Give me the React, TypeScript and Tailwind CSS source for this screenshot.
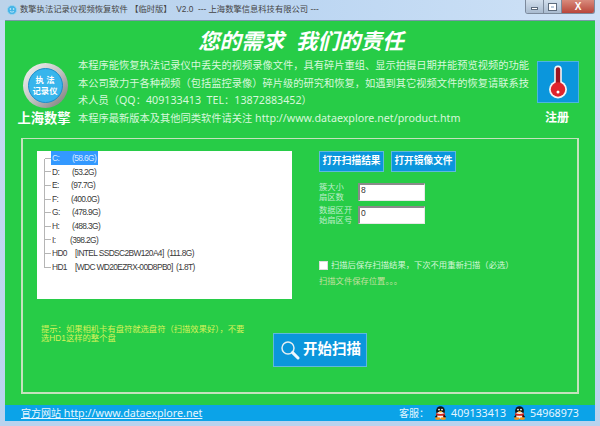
import React from "react";

const font = { fontFamily: '"Liberation Sans","Noto Sans CJK SC",sans-serif' };

const drives: { k: string; v: string; gap: string; sel?: boolean }[] = [
  { k: "C:", v: "(58.6G)", gap: "w-[20px]", sel: true },
  { k: "D:", v: "(53.2G)", gap: "w-[20px]" },
  { k: "E:", v: "(97.7G)", gap: "w-[19px]" },
  { k: "F:", v: "(400.0G)", gap: "w-[19px]" },
  { k: "G:", v: "(478.9G)", gap: "w-[20px]" },
  { k: "H:", v: "(488.3G)", gap: "w-[20px]" },
  { k: "I:", v: "(398.2G)", gap: "w-[18px]" },
  { k: "HD0", v: "[INTEL SSDSC2BW120A4]  (111.8G)", gap: "w-[23px]" },
  { k: "HD1", v: "[WDC WD20EZRX-00D8PB0]  (1.8T)", gap: "w-[23px]" },
];

function L({ children }: { children: React.ReactNode }) {
  return <span className="[font-family:'Noto_Sans',sans-serif] text-[10.7px] leading-none">{children}</span>;
}

function QQ() {
  return (
    <svg width="13" height="14" viewBox="0 0 13 14" className="block">
      <ellipse cx="6.5" cy="5" rx="4.4" ry="4.8" fill="#151515" />
      <ellipse cx="6.5" cy="9.4" rx="4.2" ry="3.6" fill="#f5f5f5" />
      <circle cx="5" cy="3.6" r="0.9" fill="#fff" />
      <circle cx="8" cy="3.6" r="0.9" fill="#fff" />
      <path d="M2.2 7 Q6.5 9 10.8 7 L11 9.2 Q6.5 10.4 2 9.2 Z" fill="#d8261c" />
      <path d="M9 9 L10.6 9 L10.6 11.6 L9 11.6 Z" fill="#d8261c" />
      <path d="M0.8 11 L3.2 8.2 L3.4 12 Z" fill="#151515" />
      <path d="M12.2 11 L9.8 8.2 L9.6 12 Z" fill="#151515" />
      <ellipse cx="3.8" cy="12.6" rx="2.8" ry="1.3" fill="#f0931a" />
      <ellipse cx="9.2" cy="12.6" rx="2.8" ry="1.3" fill="#f0931a" />
      <ellipse cx="6.5" cy="5.8" rx="1.6" ry="0.8" fill="#f2b21c" />
    </svg>
  );
}

function SmallButton({ children }: { children: React.ReactNode }) {
  return (
    <div className="w-[65px] h-[21px] flex items-center justify-center bg-[#0b96dc] border border-[#5fb9dc] text-white text-[9.7px] font-bold whitespace-nowrap">
      {children}
    </div>
  );
}

function Field({ a, b, value }: { a: string; b: string; value: string }) {
  return (
    <div className="flex items-start h-[23px]">
      <div className="w-[39px] text-[8.3px] leading-[9.5px] text-[#bfeecb]">
        <div>{a}</div>
        <div>{b}</div>
      </div>
      <div className="w-[67px] h-[18px] bg-white border-t-2 border-l-2 border-t-[#8a8a8a] border-l-[#8a8a8a] border-r border-b border-r-[#e8e8e8] border-b-[#e8e8e8] text-[8.5px] leading-[11px] text-[#333] pl-px">
        {value}
      </div>
    </div>
  );
}

export default function App() {
  return (
    <div style={font} className="w-[600px] h-[426px] flex flex-col overflow-hidden bg-gradient-to-b from-[#c6dbf2] to-[#b9d3ee]">
      <div className="h-[20px] shrink-0 flex items-start bg-gradient-to-r from-[#bcd3ea] via-[#bcd6f2] to-[#cfe2f6]">
        <svg width="10" height="10" viewBox="0 0 10 10" className="mt-[5px] ml-[7px]">
          <circle cx="5" cy="5" r="4.6" fill="#47b5e8" stroke="#9ad4ef" strokeWidth="0.8" />
          <circle cx="3.4" cy="4" r="0.8" fill="#e4f5fc" />
          <circle cx="6.6" cy="4" r="0.8" fill="#e4f5fc" />
          <path d="M3 6.5 Q5 7.8 7 6.5" stroke="#e4f5fc" strokeWidth="0.7" fill="none" />
        </svg>
        <div className="ml-[3px] mt-[4px] text-[8.3px] leading-[11px] text-[#444] whitespace-pre">
          数擎执法记录仪视频恢复软件 【临时版】  V2.0  --- 上海数擎信息科技有限公司 ---
        </div>
        <div className="ml-auto mr-[5px] flex h-[14px] border border-t-0 border-[#7c8a9c] rounded-b-[3px] overflow-hidden">
          <div className="w-[18px] bg-gradient-to-b from-[#d2dfed] to-[#a9bbcf] flex items-center justify-center border-r border-[#7c8a9c]">
            <div className="w-[7px] h-[3px] mt-[3px] bg-white border border-[#5c6b7c]" />
          </div>
          <div className="w-[18px] bg-gradient-to-b from-[#d2dfed] to-[#a9bbcf] flex items-center justify-center border-r border-[#7c8a9c]">
            <div className="w-[7px] h-[6px] border-2 border-white outline outline-1 outline-[#5c6b7c]" />
          </div>
          <div className="w-[32px] bg-gradient-to-b from-[#d88a7c] to-[#b8453a] flex items-center justify-center text-white text-[10px] font-bold leading-none">
            X
          </div>
        </div>
      </div>

      <div className="mx-[5px] h-[401px] shrink-0 bg-[#27cc47] flex flex-col border-t border-[#7a97a8]">
        <div className="h-[117px] shrink-0 flex">
          <div className="w-[73px] shrink-0 pl-[5px] flex flex-col items-center">
            <div className="mt-[42px] ml-[2px] w-[45px] h-[45px] rounded-full bg-gradient-to-br from-[#f7f7f7] via-[#c4c4c4] to-[#777] flex items-center justify-center">
              <div className="w-[35px] h-[35px] rounded-full bg-[#37b5ec] border border-[#1b8fcb] flex flex-col items-center justify-center text-white text-[8.3px] leading-[11px] font-bold">
                <div>执 法</div>
                <div className="whitespace-nowrap">记录仪</div>
              </div>
            </div>
            <div className="mt-[2px] text-white text-[13.3px] leading-[18px] font-bold whitespace-nowrap">上海数擎</div>
          </div>
          <div className="flex-1 min-w-0 flex flex-col">
            <div className="h-[36px] pt-[8px] pl-[120px] text-white text-[21.5px] leading-[26px] font-bold italic whitespace-pre">
              您的需求  我们的责任
            </div>
            <div className="text-[10.25px] leading-[17.6px] text-[#d8f8dc] whitespace-pre">
              <div className="h-[17.6px]">本程序能恢复执法记录仪中丢失的视频录像文件，具有碎片重组、显示拍摄日期并能预览视频的功能</div>
              <div className="h-[17.6px]">本公司致力于各种视频（包括监控录像）碎片级的研究和恢复，如遇到其它视频文件的恢复请联系技</div>
              <div className="h-[17.6px]">术人员（<L>QQ</L>：<L>409133413  TEL</L>：<L>13872883452</L>）</div>
              <div className="h-[17.6px]">本程序最新版本及其他同类软件请关注 <L>http://www.dataexplore.net/product.htm</L></div>
            </div>
          </div>
          <div className="w-[58px] shrink-0 flex flex-col items-start">
            <div className="mt-[40px] w-[42px] h-[42px] bg-[#0b96dc] border border-[#4db5de] flex items-center justify-center">
              <svg width="20" height="34" viewBox="0 0 20 34">
                <rect x="6.2" y="0.5" width="7.6" height="24" rx="3.8" fill="#f5f5f5" />
                <circle cx="10" cy="24.5" r="9" fill="#f5f5f5" />
                <rect x="7.8" y="2.2" width="4.4" height="20" rx="2.2" fill="#9c1420" />
                <circle cx="10" cy="24.5" r="7.2" fill="#e0242c" />
                <circle cx="10" cy="27" r="1.5" fill="#fff" />
              </svg>
            </div>
            <div className="mt-[6px] ml-[8px] text-white text-[12px] leading-[18px] font-bold">注册</div>
          </div>
        </div>

        <div className="mx-[16px] h-[256px] shrink-0 border-2 border-t border-[#c4e2bd] flex flex-col">
          <div className="flex h-[173px] shrink-0 pt-[12px] pl-[14px]">
            <div className="w-[255px] h-[148px] pt-[0.5px] bg-white shrink-0 flex items-start text-[8.4px] tracking-[-0.62px] text-[#3a3a3a]">
              <div className="ml-[7px] mt-[7px] h-[109px] w-px bg-[#b5b5b5]" />
              <div className="flex flex-col">
                {drives.map((d) => (
                  <div key={d.k} className="flex items-center h-[13.6px] whitespace-pre">
                    <div className="w-[6px] h-px bg-[#b5b5b5]" />
                    <div className={d.sel ? "flex items-center pl-[1px] w-[47px] h-[14px] bg-[#3399ff] text-[#dcebff]" : "flex pl-[1px]"}>
                      <span className={d.gap}>{d.k}</span>
                      <span>{d.v}</span>
                    </div>
                  </div>
                ))}
              </div>
            </div>
            <div className="ml-[27px] flex flex-col">
              <div className="flex gap-[7px]">
                <SmallButton>打开扫描结果</SmallButton>
                <SmallButton>打开镜像文件</SmallButton>
              </div>
              <div className="mt-[11px]">
                <Field a="簇大小" b="扇区数" value="8" />
                <Field a="数据区开" b="始扇区号" value="0" />
              </div>
              <div className="mt-[31px] flex items-center gap-[3px]">
                <div className="w-[9px] h-[9px] bg-white border border-[#ddd]" />
                <div className="text-[8.3px] leading-[11px] text-[#d5f7d9] whitespace-nowrap">扫描后保存扫描结果，下次不用重新扫描（必选）</div>
              </div>
              <div className="mt-[5px] text-[8.3px] leading-[11px] text-[#c6e0a0] whitespace-nowrap">扫描文件保存位置。。。</div>
            </div>
          </div>
          <div className="flex items-start">
            <div className="ml-[18px] mt-[13px] w-[207px] text-[8.3px] leading-[9.3px] text-[#d8f25a]">
              提示：如果相机卡有盘符就选盘符（扫描效果好），不要选HD1这样的整个盘
            </div>
            <div className="ml-[25px] mt-[21px] w-[94px] h-[34px] pl-[6px] bg-[#0b96dc] border border-[#5fb9dc] flex items-center gap-[3px] text-white text-[14.5px] font-bold">
              <svg width="20" height="20" viewBox="0 0 20 20" fill="none" className="shrink-0">
                <circle cx="8" cy="8" r="6" stroke="#e6eef2" strokeWidth="1.5" />
                <path d="M12.6 12.6 L18 18" stroke="#eef8ff" strokeWidth="3" strokeLinecap="round" />
              </svg>
              <span className="whitespace-nowrap">开始扫描</span>
            </div>
          </div>
        </div>

        <div className="mt-[11px] h-[16px] shrink-0 bg-[#0ba3e8] flex items-center text-[10px] text-[#e6f6ff] whitespace-pre">
          <span className="ml-[16px] underline">官方网站 <L>http://www.dataexplore.net</L></span>
          <span className="ml-auto">客服：</span>
          <span className="ml-[5px]"><QQ /></span>
          <span className="ml-[4px] mr-[7px]"><L>409133413</L></span>
          <QQ />
          <span className="ml-[4px] mr-[16px]"><L>54968973</L></span>
        </div>
      </div>
    </div>
  );
}
